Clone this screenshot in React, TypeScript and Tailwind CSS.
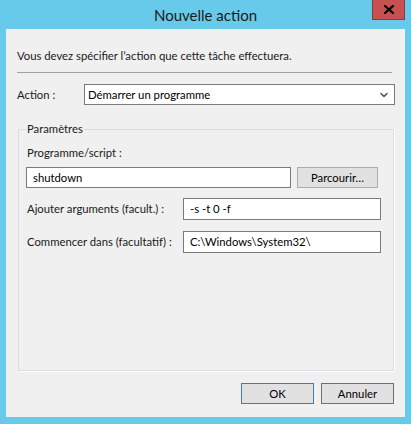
import { ChevronDown } from "lucide-react";

const font = { fontFamily: 'Lato, "Segoe UI", sans-serif' };

function Field({ value, className }: { value: string; className: string }) {
  return (
    <div
      className={`flex items-center bg-white border border-[#7a7a7a] pl-[6px] text-black whitespace-nowrap ${className}`}
    >
      {value}
    </div>
  );
}

export default function App() {
  return (
    <div
      className="w-[411px] h-[424px] bg-[#68caea] flex flex-col text-[11.3px] leading-[16px] text-[#1a1a1a] whitespace-nowrap"
      style={font}
    >
      {/* Title bar */}
      <div className="relative h-[29px] shrink-0 flex items-center justify-center">
        <span className="text-[15px] text-[#1a1a1a] pt-[1px]">Nouvelle action</span>
        <div className="absolute right-[6px] top-0 w-[33px] h-[20px] bg-[#c75050] border border-[#8a3a3a] border-t-0 flex items-center justify-center">
          <svg width="10" height="9" viewBox="0 0 10 9">
            <path d="M1 1 L9 8 M9 1 L1 8" stroke="#000" strokeWidth="2.2" strokeLinecap="square" />
          </svg>
        </div>
      </div>

      {/* Client area */}
      <div className="flex-1 mx-[6px] mb-[7px] bg-[#f0f0f0] flex flex-col">
        <p className="pt-[19px] pl-[11px]">Vous devez spécifier l’action que cette tâche effectuera.</p>
        <div className="mt-[8px] ml-[11px] mr-[13px] h-px bg-[#a0a0a0]" />

        {/* Action */}
        <div className="mt-[11px] flex items-center">
          <span className="w-[78px] pl-[11px] shrink-0">Action :</span>
          <div className="w-[311px] h-[21px] bg-white border border-[#7a7a7a] flex items-center justify-between pl-[3px] pr-[4px] text-black">
            <span>Démarrer un programme</span>
            <ChevronDown size={12} strokeWidth={3.2} className="text-[#555]" />
          </div>
        </div>

        {/* Paramètres */}
        <div className="relative mt-[24px] ml-[12px] w-[376px] h-[242px] border border-[#d5dfe5] shadow-[1px_1px_0_#ffffff] flex flex-col px-[7px]">
          <span className="absolute -top-[9px] left-[7px] px-[1px] bg-[#f0f0f0]">Paramètres</span>
          <span className="mt-[15px] ml-[1px]">Programme/script :</span>
          <div className="mt-[6px] flex gap-[6px]">
            <Field value="shutdown" className="w-[265px] h-[21px]" />
            <div className="w-[81px] h-[21px] bg-[#e1e1e1] border border-[#adadad] flex items-center justify-center text-black">
              Parcourir…
            </div>
          </div>
          <div className="mt-[10px] flex items-center">
            <span className="w-[156px] shrink-0 ml-[1px]">Ajouter arguments (facult.) :</span>
            <Field value="-s -t 0 -f" className="w-[198px] h-[22px]" />
          </div>
          <div className="mt-[11px] flex items-center">
            <span className="w-[156px] shrink-0 ml-[1px]">Commencer dans (facultatif) :</span>
            <Field value="C:\Windows\System32\" className="w-[198px] h-[22px]" />
          </div>
        </div>

        {/* Buttons */}
        <div className="mt-[12px] pr-[11px] flex justify-end gap-[7px]">
          <div className="w-[73px] h-[21px] bg-[#e1e1e1] border border-[#3c7fb1] flex items-center justify-center text-black">
            OK
          </div>
          <div className="w-[73px] h-[21px] bg-[#e1e1e1] border border-[#707070] flex items-center justify-center text-black">
            Annuler
          </div>
        </div>
      </div>
    </div>
  );
}
